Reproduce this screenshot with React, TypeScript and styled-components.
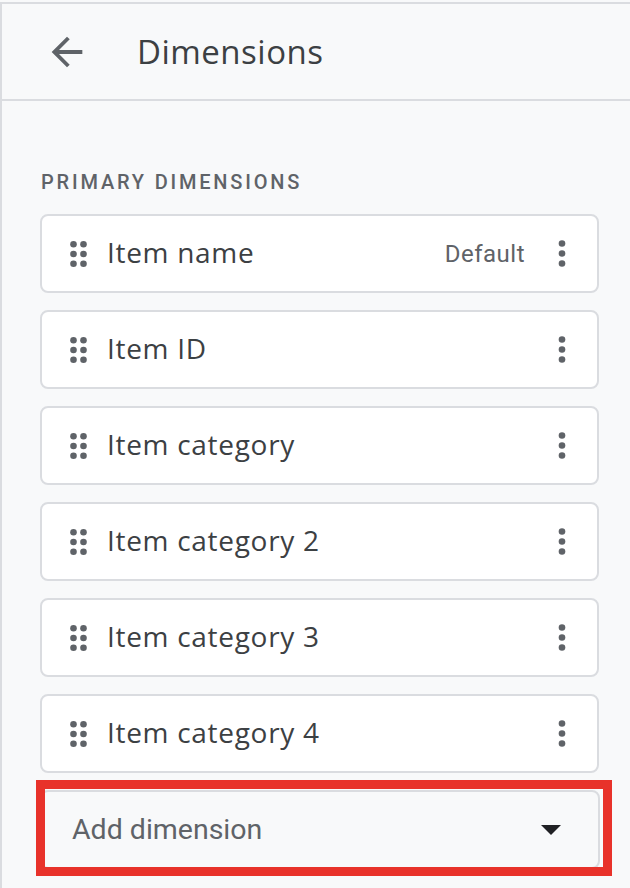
import React from "react"
import styled, { createGlobalStyle } from "styled-components"

const GlobalStyle = createGlobalStyle`
	html, body {
		margin: 0;
		padding: 0;
		background: #f8f9fa;
	}
	body {
		font-family: Roboto, "Liberation Sans", sans-serif;
		-webkit-font-smoothing: antialiased;
	}
`

const StyledPanel = styled.div`
	margin-top: 2px;
	min-height: 886px;
	box-sizing: border-box;
	border-top: 2px solid #dadce0;
	border-left: 2px solid #dadce0;
	background: #f8f9fa;
`

const StyledHeader = styled.header`
	display: flex;
	align-items: center;
	height: 95px;
	padding-left: 42px;
	border-bottom: 2px solid #dadce0;
`

const StyledBack = styled.button`
	display: flex;
	align-items: center;
	justify-content: center;
	width: 46px;
	height: 46px;
	padding: 0;
	border: none;
	background: transparent;
	color: #5f6368;
	cursor: pointer;
`

const StyledTitle = styled.h1`
	margin: 0 0 0 47px;
	font-family: "Open Sans", Roboto, sans-serif;
	font-size: 33px;
	font-weight: 400;
	color: #3c4043;
	letter-spacing: 0.5px;
`

const StyledSection = styled.section`
	padding: 69px 31px 0 38px;
`

const StyledOverline = styled.div`
	margin: 0 0 20px 1px;
	font-size: 20px;
	line-height: 24px;
	font-weight: 500;
	letter-spacing: 2.8px;
	color: #5f6368;
	text-transform: uppercase;
`

const StyledList = styled.div`
	display: flex;
	flex-direction: column;
	gap: 17px;
`

const StyledCard = styled.div`
	display: flex;
	align-items: center;
	height: 79px;
	box-sizing: border-box;
	padding: 0 31px 0 28px;
	background: #fff;
	border: 2px solid #dadce0;
	border-radius: 8px;
`

const StyledHandle = styled.svg`
	flex: none;
	width: 18px;
	height: 26px;
	color: #5f6368;
`

const StyledName = styled.span`
	flex: 1;
	margin-left: 19px;
	padding-bottom: 4px;
	font-family: "Open Sans", Roboto, sans-serif;
	font-size: 28px;
	font-weight: 500;
	letter-spacing: 0.7px;
	color: #3c4043;
`

const StyledDefault = styled.span`
	margin-right: 33px;
	font-size: 24px;
	letter-spacing: 0.5px;
	color: #5f6368;
`

const StyledKebab = styled.svg`
	flex: none;
	width: 8px;
	height: 27px;
	color: #5f6368;
`

const StyledAddWrap = styled.div`
	position: relative;
	margin-top: 17px;
	margin-right: -1px;
`

const StyledSelect = styled.div`
	display: flex;
	align-items: center;
	height: 79px;
	box-sizing: border-box;
	padding: 0 37px 0 30px;
	background: #f8f9fa;
	border: 2px solid #dadce0;
	border-radius: 8px;
`

const StyledPlaceholder = styled.span`
	flex: 1;
	font-size: 28.5px;
	color: #5f6368;
`

const StyledCaret = styled.svg`
	width: 20px;
	height: 10px;
	color: #202124;
`

const StyledHighlight = styled.div`
	position: absolute;
	left: -4px;
	top: -10px;
	right: -12px;
	bottom: -7px;
	border: 9px solid #e8322a;
	pointer-events: none;
`

const Handle = () => (
	<StyledHandle viewBox="0 0 18 26">
		{[3.3, 13, 22.7].map((y) => (
			<g key={y} fill="currentColor">
				<circle cx="3.5" cy={y} r="3.3" />
				<circle cx="13.5" cy={y} r="3.3" />
			</g>
		))}
	</StyledHandle>
)

const Kebab = () => (
	<StyledKebab viewBox="0 0 8 27">
		<g fill="currentColor">
			<circle cx="4" cy="3.5" r="3.3" />
			<circle cx="4" cy="13.5" r="3.3" />
			<circle cx="4" cy="23.5" r="3.3" />
		</g>
	</StyledKebab>
)

const dimensions = [
	{ name: "Item name", isDefault: true },
	{ name: "Item ID" },
	{ name: "Item category" },
	{ name: "Item category 2" },
	{ name: "Item category 3" },
	{ name: "Item category 4" },
]

const App = () => {
	return (
		<>
			<GlobalStyle />
			<StyledPanel>
				<StyledHeader>
					<StyledBack aria-label="Back">
						<svg width="46" height="46" viewBox="0 0 24 24" fill="currentColor">
							<path d="M20 11H7.83l5.59-5.59L12 4l-8 8 8 8 1.41-1.41L7.83 13H20v-2z" />
						</svg>
					</StyledBack>
					<StyledTitle>Dimensions</StyledTitle>
				</StyledHeader>

				<StyledSection>
					<StyledOverline>Primary dimensions</StyledOverline>
					<StyledList>
						{dimensions.map((item) => (
							<StyledCard key={item.name}>
								<Handle />
								<StyledName>{item.name}</StyledName>
								{item.isDefault && <StyledDefault>Default</StyledDefault>}
								<Kebab />
							</StyledCard>
						))}
					</StyledList>

					<StyledAddWrap>
						<StyledSelect>
							<StyledPlaceholder>Add dimension</StyledPlaceholder>
							<StyledCaret viewBox="0 0 20 10">
								<path d="M0 0h20L10 10z" fill="currentColor" />
							</StyledCaret>
						</StyledSelect>
						<StyledHighlight />
					</StyledAddWrap>
				</StyledSection>
			</StyledPanel>
		</>
	)
}

export default App
